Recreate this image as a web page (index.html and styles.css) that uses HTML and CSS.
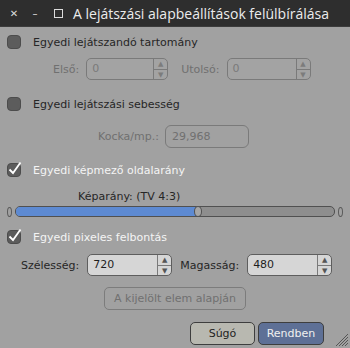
FILE: index.html
```html
<html>
    <head>
        <title>A lejátszási alapbeállítások felülbírálása</title>
        <link rel="stylesheet" href="styles.css">
    </head>
    <body>
        <div class="window">
            <div class="titlebar">
                <span class="tb-btn">&#x2715;</span>
                <span class="tb-btn">&#x2013;</span>
                <span class="tb-btn tb-max"></span>
                <span class="tb-title">A lejátszási alapbeállítások felülbírálása</span>
            </div>

            <div class="content">
                <!-- tartomány -->
                <label class="check"><span class="box"></span>Egyedi lejátszandó tartomány</label>
                <div class="row range-row">
                    <span class="lbl disabled lbl-first">Első:</span>
                    <div class="spin disabled w-first"><span class="val">0</span><span class="arrows"><i>&#9650;</i><i>&#9660;</i></span></div>
                    <span class="lbl disabled lbl-last">Utolsó:</span>
                    <div class="spin disabled w-last"><span class="val">0</span><span class="arrows"><i>&#9650;</i><i>&#9660;</i></span></div>
                </div>

                <!-- sebesség -->
                <label class="check"><span class="box"></span>Egyedi lejátszási sebesség</label>
                <div class="row fps-row">
                    <span class="lbl disabled">Kocka/mp.:</span>
                    <div class="entry disabled">29,968</div>
                </div>

                <!-- oldalarány -->
                <label class="check on"><span class="box"><svg class="tick" width="14" height="14" viewBox="0 0 14 14"><path d="M2.5 6.5 L6 10 L13.5 -0.5" fill="none" stroke="#fff" stroke-width="1.8"/></svg></span>Egyedi képmező oldalarány</label>
                <div class="ratio-label">Képarány: (TV 4:3)</div>
                <div class="slider">
                    <span class="knob"></span>
                    <div class="track">
                        <div class="fill" style="width: 57%"></div>
                        <span class="handle"></span>
                    </div>
                    <span class="knob"></span>
                </div>

                <!-- felbontás -->
                <label class="check on"><span class="box"><svg class="tick" width="14" height="14" viewBox="0 0 14 14"><path d="M2.5 6.5 L6 10 L13.5 -0.5" fill="none" stroke="#fff" stroke-width="1.8"/></svg></span>Egyedi pixeles felbontás</label>
                <div class="row res-row">
                    <span class="lbl">Szélesség:</span>
                    <div class="spin w-res"><span class="val">720</span><span class="arrows"><i>&#9650;</i><i>&#9660;</i></span></div>
                    <span class="lbl lbl-height">Magasság:</span>
                    <div class="spin w-res"><span class="val">480</span><span class="arrows"><i>&#9650;</i><i>&#9660;</i></span></div>
                </div>
                <div class="row sel-row">
                    <span class="btn disabled">A kijelölt elem alapján</span>
                </div>

                <div class="row footer">
                    <span class="btn help">Súgó</span>
                    <span class="btn ok">Rendben</span>
                </div>
            </div>
            <svg class="grip" width="14" height="14" viewBox="0 0 14 14">
                <path d="M14 2 L2 14 M14 5 L5 14 M14 8 L8 14 M14 11 L11 14" stroke="#555" stroke-width="1"/>
            </svg>
        </div>
    </body>
</html>
```

FILE: styles.css
```css
* {
    padding: 0;
    margin: 0;
    box-sizing: border-box;
}

body {
    width: 350px;
    height: 348px;
    overflow: hidden;
    background: #a1a1a1;
    font-family: "DejaVu Sans", sans-serif;
    font-size: 11px;
    color: #262626;
}

.window {
    position: relative;
    width: 350px;
    height: 348px;
    background: #a1a1a1;
}

.titlebar {
    height: 27px;
    background: #2e2e2e;
    border-bottom: 1px solid #3c3c3c;
    display: flex;
    align-items: center;
    color: #e6e6e6;
}

.tb-btn {
    width: 18px;
    text-align: center;
    font-size: 10px;
    color: #dcdcdc;
}

.tb-btn:first-child {
    margin-left: 5px;
}

.tb-btn + .tb-btn {
    margin-left: 3px;
}

.tb-max {
    width: 9px;
    height: 9px;
    border: 1px solid #dcdcdc;
    margin-left: 10px !important;
}

.tb-title {
    margin-left: 10px;
    font-family: "Open Sans", sans-serif;
    font-size: 14px;
    color: #ececec;
    white-space: nowrap;
}

.content {
    display: flex;
    flex-direction: column;
    padding: 8px 7px 0 7px;
}

.check {
    display: flex;
    align-items: center;
    height: 14px;
    white-space: nowrap;
}

.check .box {
    width: 14px;
    height: 14px;
    border-radius: 4px;
    background: #5c5c5c;
    border: 1px solid #4c4c4c;
    margin-right: 12px;
    display: flex;
}

.check .tick {
    overflow: visible;
    margin: -1px 0 0 -1px;
}

.check.on {
    color: #f4f4f4;
}

.row {
    display: flex;
    align-items: center;
}

.lbl {
    white-space: nowrap;
}

.disabled {
    color: #707070;
}

.spin {
    display: flex;
    height: 22px;
    border: 1px solid #5e5e5e;
    border-radius: 5px;
    background: #d6d6d6;
    color: #1e1e1e;
}

.spin.disabled {
    background: #a3a3a3;
    border-color: #7a7a7a;
    color: #7a7a7a;
}

.spin .val {
    flex: 1;
    padding-left: 5px;
    line-height: 20px;
}

.spin .arrows {
    width: 14px;
    display: flex;
    flex-direction: column;
    border-left: 1px solid #7a7a7a;
}

.spin .arrows i {
    flex: 1;
    font-style: normal;
    font-size: 7px;
    text-align: center;
    line-height: 10px;
    color: #555;
}

.spin.disabled .arrows i {
    color: #7c7c7c;
}

.spin .arrows i + i {
    border-top: 1px solid #7a7a7a;
}

.range-row {
    margin-top: 9px;
}

.lbl-first {
    margin-left: 46px;
    margin-right: 7px;
}

.w-first {
    width: 82px;
}

.lbl-last {
    margin-left: 13px;
    margin-right: 7px;
}

.w-last {
    width: 84px;
}

.range-row + .check {
    margin-top: 17px;
}

.fps-row {
    margin-top: 14px;
    margin-left: 91px;
}

.entry {
    width: 84px;
    height: 23px;
    margin-left: 6px;
    border: 1px solid #7a7a7a;
    border-radius: 6px;
    padding-left: 6px;
    line-height: 21px;
}

.fps-row + .check {
    margin-top: 15px;
}

.ratio-label {
    margin-top: 13px;
    margin-left: 71px;
}

.slider {
    display: flex;
    align-items: center;
    margin: 3px -4px 0 -4px;
}

.knob {
    width: 5px;
    height: 10px;
    border: 1px solid #5a5a5a;
    border-radius: 50%;
    margin: 0 3px 0 4px;
}

.knob:last-child {
    margin: 0 4px 0 3px;
}

.track {
    position: relative;
    flex: 1;
    height: 11px;
    border: 1px solid #505050;
    border-radius: 5px;
    background: #8e8e8e;
}

.fill {
    height: 9px;
    background: #5d8ad2;
    border-radius: 4px 0 0 4px;
}

.handle {
    position: absolute;
    top: -1px;
    left: calc(57% - 3px);
    width: 8px;
    height: 11px;
    border: 1px solid #505050;
    border-radius: 50%;
    background: #a6a6a6;
}

.slider + .check {
    margin-top: 13px;
}

.res-row {
    margin-top: 10px;
    margin-left: 14px;
}

.res-row .lbl {
    margin-right: 8px;
}

.w-res {
    width: 85px;
}

.lbl-height {
    margin-left: 8px;
}

.btn {
    display: inline-block;
    height: 23px;
    line-height: 21px;
    border: 1px solid #3e3e3e;
    border-radius: 5px;
    text-align: center;
    white-space: nowrap;
}

.sel-row {
    margin-top: 11px;
    margin-left: 97px;
}

.sel-row .btn {
    width: 142px;
    border-color: #7c7c7c;
}

.footer {
    margin-top: 12px;
    justify-content: flex-end;
    padding-right: 19px;
}

.help {
    width: 65px;
    background: #b8b8b0;
    color: #1e1e1e;
}

.ok {
    width: 66px;
    margin-left: 3px;
    background: #5e7096;
    color: #f0f0f0;
}

.grip {
    position: absolute;
    right: 2px;
    bottom: 2px;
}
```
